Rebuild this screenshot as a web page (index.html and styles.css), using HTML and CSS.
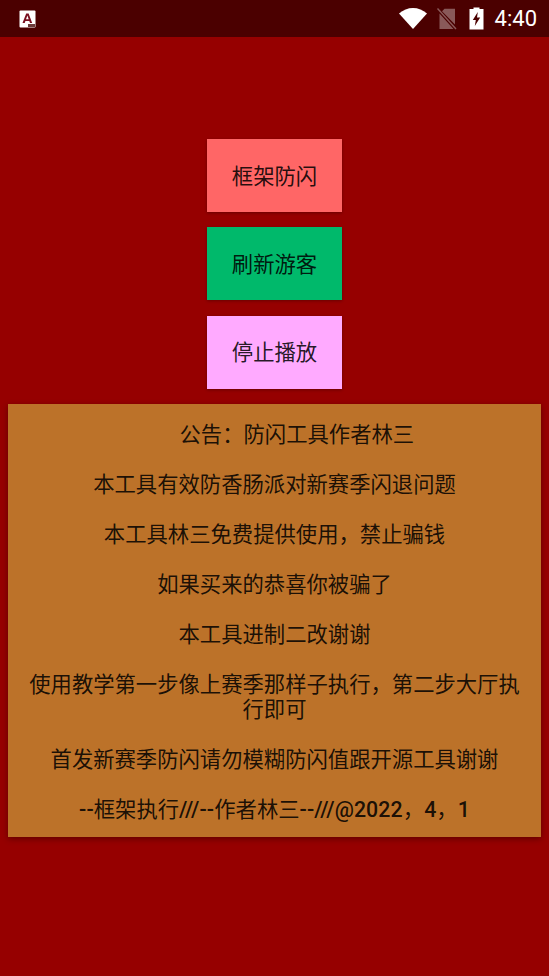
FILE: index.html
```html
<!DOCTYPE html>
<html lang="zh-CN">
<head>
  <meta charset="UTF-8">
  <meta name="viewport" content="width=device-width, initial-scale=1.0">
  <title>框架防闪</title>
  <link rel="stylesheet" href="styles.css">
</head>
<body>
  <div class="status-bar">
    <svg class="app-icon" width="18" height="18" viewBox="0 0 18 18">
      <rect x="0.5" y="0.5" width="16" height="17" rx="1" fill="#fff"/>
      <path d="M3.5 13 L7.2 3.5 H9.6 L13.2 13 H11 L10.3 11 H6.4 L5.7 13 Z M7 9.2 H9.7 L8.4 5.6 Z" fill="#7a1020" fill-rule="evenodd"/>
      <rect x="9" y="14" width="7" height="3" fill="#6b3a3a"/>
    </svg>
    <div class="status-right">
      <svg class="wifi" width="28" height="21" viewBox="0 0 28 21">
        <path d="M0 5.6 C4 2 9 0 14 0 C19 0 24 2 28 5.6 L14 21 Z" fill="#fff"/>
      </svg>
      <svg class="no-sim" width="20" height="22" viewBox="0 0 20 22">
        <path d="M5 3.2 L7.5 0.8 H18 V16.5 Z M2.5 5.6 L16.5 21 H2.5 Z" fill="#fff" opacity="0.35"/>
        <path d="M0.5 0.5 L19 21" stroke="#fff" stroke-width="1.4" opacity="0.35"/>
      </svg>
      <svg class="battery" width="15" height="23" viewBox="0 0 15 23">
        <path d="M4.5 0.5 H10.5 V2 H14.5 V22.5 H0.5 V2 H4.5 Z M8.8 5 L3.8 13 H6.8 L5.8 19 L11.2 10.5 H8 Z" fill="#fff" fill-rule="evenodd"/>
      </svg>
      <span class="clock">4:40</span>
    </div>
  </div>

  <div class="main">
    <button class="tool-btn btn-red">框架防闪</button>
    <button class="tool-btn btn-green">刷新游客</button>
    <button class="tool-btn btn-pink">停止播放</button>

    <div class="notice">
      <p class="notice-title">　　公告：防闪工具作者林三</p>
      <p>本工具有效防香肠派对新赛季闪退问题</p>
      <p>本工具林三免费提供使用，禁止骗钱</p>
      <p>如果买来的恭喜你被骗了</p>
      <p>本工具进制二改谢谢</p>
      <p>使用教学第一步像上赛季那样子执行，第二步大厅执行即可</p>
      <p>首发新赛季防闪请勿模糊防闪值跟开源工具谢谢</p>
      <p><span class="latin">--</span>框架执行<span class="latin">///--</span>作者林三<span class="latin">--///@2022</span>，<span class="latin">4</span>，<span class="latin">1</span></p>
    </div>
  </div>
</body>
</html>
```

FILE: styles.css
```css
html, body {
  margin: 0;
  padding: 0;
}
body {
  width: 549px;
  height: 976px;
  overflow: hidden;
  background-color: #960000;
  font-family: Roboto, "Noto Sans CJK SC", sans-serif;
}
.status-bar {
  height: 37px;
  background-color: #4b0000;
  display: flex;
  justify-content: space-between;
  align-items: center;
  padding: 0 12px 0 19px;
  box-sizing: border-box;
}
.app-icon {
  display: block;
}
.status-right {
  display: flex;
  align-items: center;
}
.wifi {
  margin-right: 10px;
}
.no-sim {
  margin-right: 12px;
}
.battery {
  margin-right: 11px;
}
.clock {
  color: #fff;
  font-size: 22px;
}
.main {
  display: flex;
  flex-direction: column;
  align-items: center;
  padding: 102px 8px 0;
}
.tool-btn {
  width: 134.67px;
  height: 73px;
  margin-bottom: 15.33px;
  border: none;
  padding: 0 0 3px;
  font-family: inherit;
  font-size: 21.33px;
  color: rgba(0, 0, 0, 0.87);
  box-shadow: 0 1px 3px rgba(0, 0, 0, 0.3);
}
.btn-red {
  background-color: #ff6666;
}
.btn-green {
  background-color: #00b96b;
}
.btn-pink {
  background-color: #ffaaff;
}
.notice {
  width: 533px;
  height: 433px;
  box-sizing: border-box;
  padding: 18px 16px 0;
  background-color: #bc7229;
  box-shadow: 0 2px 6px rgba(0, 0, 0, 0.35);
  text-align: center;
  font-size: 21.33px;
  line-height: 25px;
  color: rgba(0, 0, 0, 0.87);
}
.notice p {
  margin: 0 0 25px;
}
.notice .notice-title {
  padding-left: 2px;
}
.latin {
  font-weight: 500;
  letter-spacing: 0.1px;
}
```
